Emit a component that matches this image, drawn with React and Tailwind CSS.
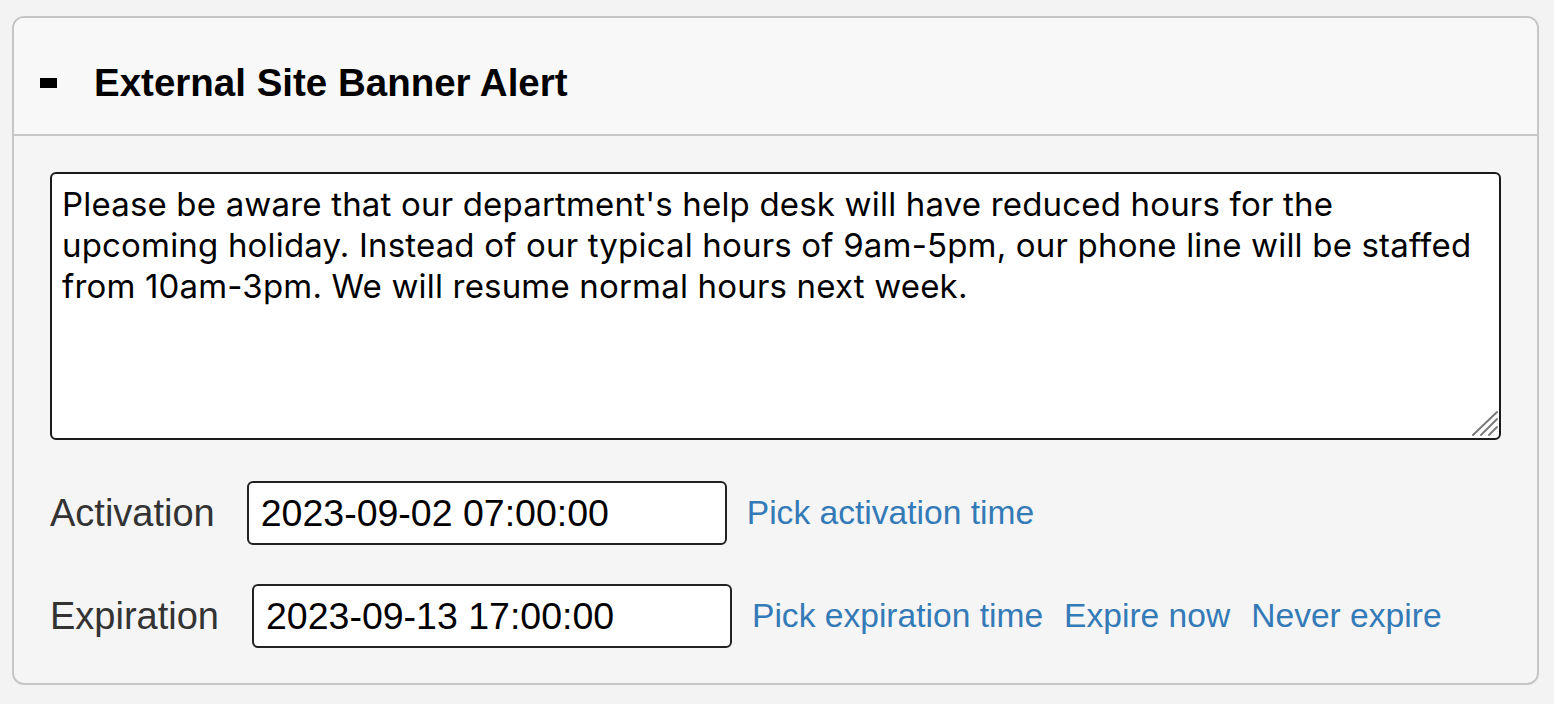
import React from "react";

const bannerText =
  "Please be aware that our department's help desk will have reduced hours for the upcoming holiday. Instead of our typical hours of 9am-5pm, our phone line will be staffed from 10am-3pm. We will resume normal hours next week.";

const DateRow = ({ label, value, links, labelGap }) => (
  <div className="flex items-center">
    <label className={`text-[38px] text-[#333] ${labelGap}`}>{label}</label>
    <input
      type="text"
      defaultValue={value}
      className="w-[480px] h-[64px] px-3 text-[37.5px] text-black bg-white border-2 border-[#222] rounded-md outline-none"
    />
    <div className="flex items-center gap-[21px] ml-5">
      {links.map((l) => (
        <a key={l} href="#" className="text-[33.6px] text-[#337ab7]">
          {l}
        </a>
      ))}
    </div>
  </div>
);

export default function App() {
  return (
    <div className="min-h-screen bg-[#f3f3f3] pt-4 pl-3 pr-[15px] font-['Liberation_Sans',Arial,sans-serif]">
      <div className="border-2 border-[#c6c6c6] rounded-xl bg-[#f5f5f5] h-[669px] overflow-hidden">
        {/* Header */}
        <div className="h-[118px] flex items-center bg-[#f8f8f8] border-b-2 border-[#c8c8c8] pl-[26px] pt-[14px]">
          <button type="button" aria-label="Collapse" className="w-[54px] flex items-center">
            <span className="block w-[17px] h-[10px] bg-black" />
          </button>
          <h2 className="text-[38.5px] font-bold text-black">External Site Banner Alert</h2>
        </div>

        {/* Body */}
        <div className="pl-9 pr-9 pt-9">
          <div className="relative">
            <textarea
              defaultValue={bannerText}
              className="w-full h-[268px] block resize-none border-2 border-[#1a1a1a] rounded-md bg-white pl-[10px] pr-[22px] py-[10px] text-[33px] leading-[41px] tracking-[0.18px] text-black outline-none font-['Inter',sans-serif]"
            />
            {/* resize grip */}
            <svg
              className="absolute right-[1px] bottom-[3px] pointer-events-none"
              width="30"
              height="28"
              viewBox="0 0 30 28"
            >
              <g stroke="#7a7a7a" strokeWidth="2" strokeLinecap="round">
                <line x1="3" y1="26" x2="27" y2="3" />
                <line x1="11" y1="26" x2="27" y2="10" />
                <line x1="19" y1="26" x2="27" y2="18" />
              </g>
            </svg>
          </div>

          <div className="mt-[41px] flex flex-col gap-[39px]">
            <DateRow
              label="Activation"
              value="2023-09-02 07:00:00"
              labelGap="mr-[32px]"
              links={["Pick activation time"]}
            />
            <DateRow
              label="Expiration"
              value="2023-09-13 17:00:00"
              labelGap="mr-[33px]"
              links={["Pick expiration time", "Expire now", "Never expire"]}
            />
          </div>
        </div>
      </div>
    </div>
  );
}
